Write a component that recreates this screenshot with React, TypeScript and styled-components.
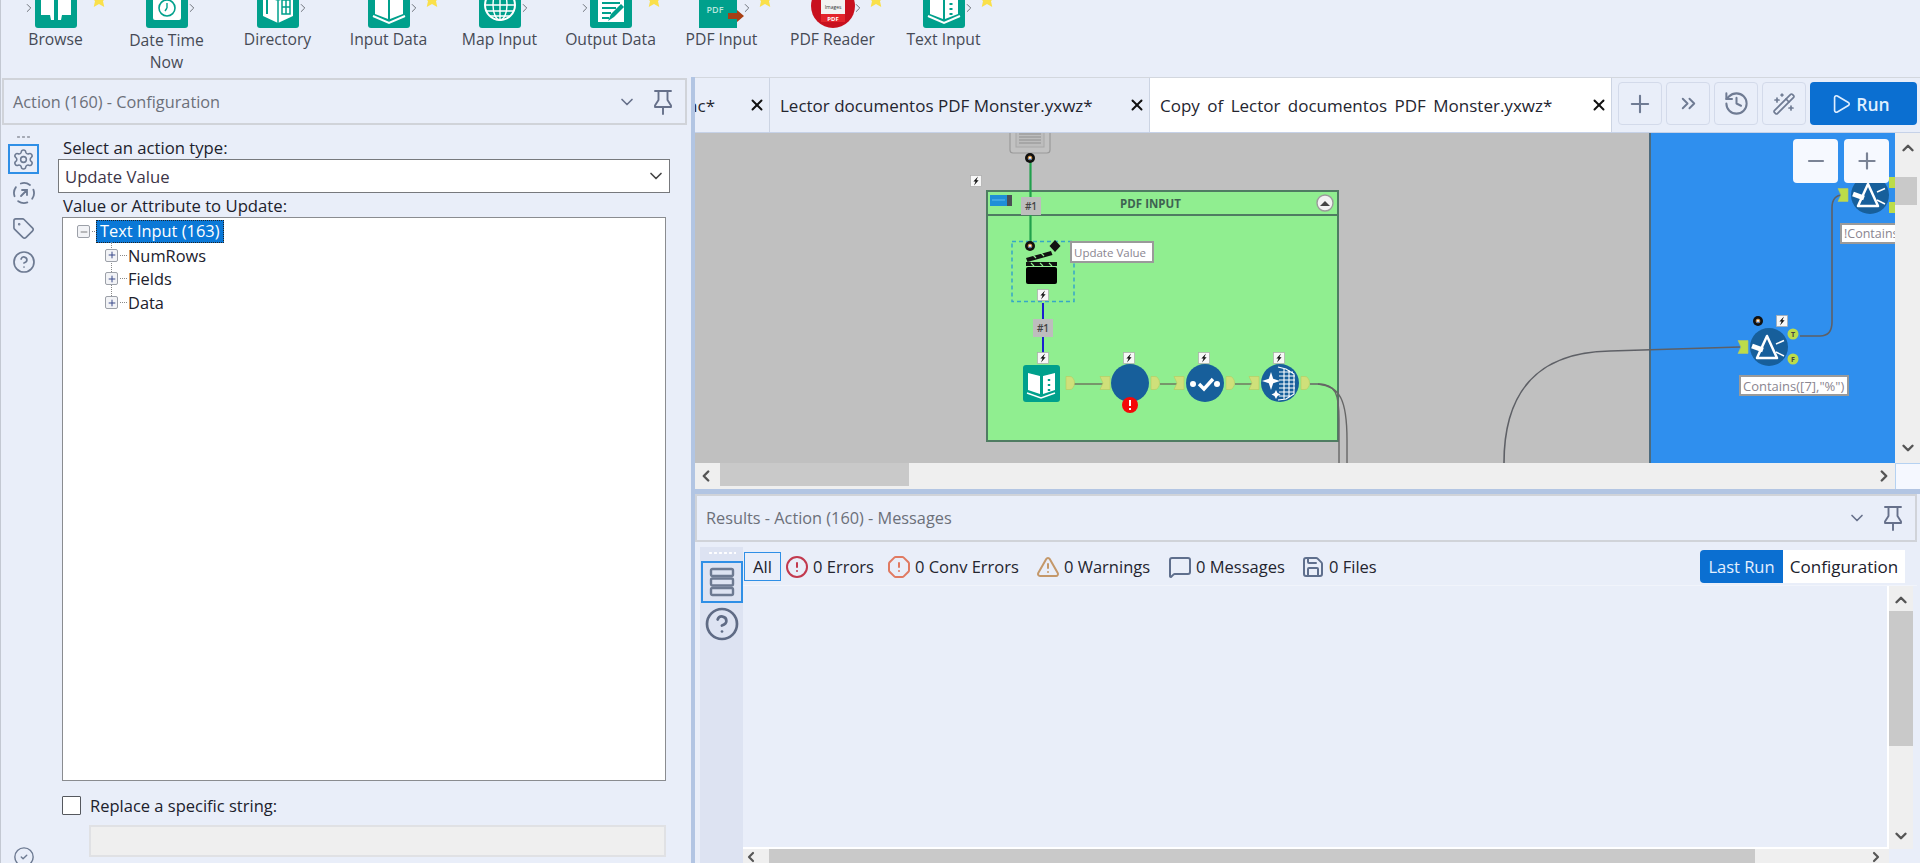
import React from "react";
import styled, { createGlobalStyle } from "styled-components";
import {
  ChevronDown, ChevronUp, ChevronLeft, ChevronRight, Plus, Minus, ChevronsRight, History, WandSparkles,
  Play, X, Settings, Tag, CircleHelp, CircleAlert, OctagonAlert, TriangleAlert, MessageSquare, Save, CircleCheck,
} from "lucide-react";

const FONT = `"Open Sans", "Noto Sans", "Liberation Sans", sans-serif`;
const BG = "#e9eef9";
const OX = 695;
const OY = 133;

const Global = createGlobalStyle`
  html, body { margin: 0; padding: 0; height: 863px; overflow: hidden; background: ${BG}; }
  body { font-family: ${FONT}; color: #20212c; }
  * { box-sizing: border-box; }
`;

const Page = styled.div`display:flex;flex-direction:column;width:1920px;height:863px;overflow:hidden;background:${BG};`;

/* ---------- ribbon ---------- */
const Ribbon = styled.div`display:flex;height:77px;flex:none;border-left:1px solid #c3c8d2;`;
const RibbonItem = styled.div`position:relative;width:111px;flex:none;margin-left:${p => (p.$first ? -1 : 0)}px;display:flex;flex-direction:column;align-items:center;`;
const IconClip = styled.div`height:28px;width:50px;overflow:hidden;display:flex;align-items:flex-end;justify-content:center;flex:none;`;
const RibbonLabel = styled.div`font-size:15.7px;line-height:22px;text-align:center;color:#464a55;width:100px;margin-top:${p => (p.$tall ? 1 : 0)}px;`;
const StarMark = styled.svg`position:absolute;left:90px;top:-10px;width:18px;height:18px;`;
const Caret = styled.span`position:absolute;left:${p => p.$left}px;top:1px;color:#666a72;display:flex;`;

const W = "#fff";
const Tile = ({ children, fill = "#00a08c" }: { children?: React.ReactNode; fill?: string }) => (
  <svg width="42" height="42" viewBox="0 0 42 42" style={{ flex: "none" }}>
    <rect width="42" height="42" rx="3" fill={fill} />
    {children}
  </svg>
);

const BrowseIcon = () => (
  <Tile>
    <path d="M6 12h13v22h-3l-1-5H6zM36 12H23v22h3l1-5h9z" fill={W} />
    <path d="M6 31h9M6 34h8M36 31h-9M36 34h-8" stroke="#00a08c" strokeWidth="1" />
  </Tile>
);
const DateIcon = () => (
  <Tile>
    <rect x="7" y="8" width="28" height="26" rx="2" fill={W} />
    <circle cx="21" cy="22" r="8" fill="none" stroke="#00a08c" strokeWidth="1.6" />
    <path d="M21 22v-5M21 22l-2 3" stroke="#00a08c" strokeWidth="1.4" />
  </Tile>
);
const DirIcon = () => (
  <Tile>
    <path d="M6 10l15 5 15-5v20l-15 7-15-7z" fill={W} />
    <path d="M21 15v22" stroke="#00a08c" strokeWidth="1.5" />
    <path d="M25 14h8v14h-8zM29 14v14M25 21h8" fill="none" stroke="#00a08c" strokeWidth="1.5" />
    <path d="M10 14v14" stroke="#00a08c" strokeWidth="2" />
  </Tile>
);
const BookIcon = () => (
  <Tile>
    <path d="M7 10l13 4v19L7 28zM35 10l-13 4v19l13-5z" fill={W} />
    <path d="M5 30l16 7 16-7" fill="none" stroke={W} strokeWidth="2" />
  </Tile>
);
const MapIcon = () => (
  <Tile>
    <circle cx="21" cy="19" r="15" fill="none" stroke={W} strokeWidth="2" />
    <ellipse cx="21" cy="19" rx="7" ry="15" fill="none" stroke={W} strokeWidth="1.4" />
    <path d="M21 4v30M6 19h30M8 13h26M8 25h26M11 30h20" stroke={W} strokeWidth="1.4" />
  </Tile>
);
const OutputIcon = () => (
  <Tile>
    <rect x="8" y="6" width="26" height="30" fill={W} />
    <path d="M12 17h18M12 22h14M12 27h9M12 32h7" stroke="#00a08c" strokeWidth="2" />
    <path d="M18 35l3-7 10-10 3 3-10 10z" fill="#00a08c" />
  </Tile>
);
const PdfInIcon = () => (
  <svg width="42" height="42" viewBox="2 0 42 42" style={{ flex: "none", overflow: "visible" }}>
    <rect x="0" width="38" height="42" fill="#00a08c" />
    <text x="16" y="27" fill="#b9e6dd" fontSize="9" textAnchor="middle" fontFamily={FONT} fontWeight="600">PDF</text>
    <path d="M29 27h9v-3l7 6-7 6v-3h-9z" fill="#a83f14" />
  </svg>
);
const PdfReadIcon = () => (
  <svg width="44" height="44" viewBox="-1 -1 44 44" style={{ flex: "none" }}>
    <circle cx="21" cy="21" r="22" fill="#c8101e" />
    <rect x="9" y="4" width="24" height="33" fill="#f2f2f2" />
    <rect x="9" y="29" width="24" height="8" fill="#e3242b" />
    <text x="21" y="24" fontSize="5" textAnchor="middle" fill="#333" fontFamily={FONT}>Images</text>
    <text x="21" y="35.500" fontSize="6" fontWeight="700" textAnchor="middle" fill="#fff" fontFamily={FONT}>PDF</text>
  </svg>
);
const TextInIcon = () => (
  <Tile>
    <path d="M7 10l13 4v19L7 28zM35 10l-13 4v19l13-5z" fill={W} />
    <path d="M5 30l16 7 16-7" fill="none" stroke={W} strokeWidth="2" />
    <path d="M28 17v2M28 22v2M28 27v2" stroke="#00a08c" strokeWidth="3" />
  </Tile>
);

const ribbonItems = [
  { label: "Browse", Icon: BrowseIcon, star: true, caret: 29 },
  { label: "Date Time Now", Icon: DateIcon, caret: 81 },
  { label: "Directory", Icon: DirIcon, caret: 81 },
  { label: "Input Data", Icon: BookIcon, star: true, caret: 81 },
  { label: "Map Input", Icon: MapIcon, caret: 81 },
  { label: "Output Data", Icon: OutputIcon, star: true, caret: 30 },
  { label: "PDF Input", Icon: PdfInIcon, star: true, caret: 81 },
  { label: "PDF Reader", Icon: PdfReadIcon, star: true, caret: 81 },
  { label: "Text Input", Icon: TextInIcon, star: true, caret: 81 },
];

const PinIcon = () => (
  <svg width="24" height="26" viewBox="0 0 24 26" fill="none" stroke="currentColor" strokeWidth="1.9" strokeLinejoin="round" strokeLinecap="round">
    <path d="M4 2h16M7.500 2v9L4 16.500V18h16v-1.500L16.500 11V2M12 18v7" />
  </svg>
);

/* ---------- shell ---------- */
const Main = styled.div`display:flex;flex:1;min-height:0;`;
const LeftPanel = styled.div`width:691px;flex:none;display:flex;flex-direction:column;border-left:1px solid #c3c8d2;padding-top:1px;padding-left:1px;overflow:hidden;`;
const PanelTitle = styled.div`height:${p => p.$h}px;flex:none;display:flex;align-items:center;border:2px solid #d0d3d9;padding:0 10px 0 9px;color:#6c7079;font-size:16.3px;margin-right:${p => p.$mr}px;`;
const TitleText = styled.span`flex:1;`;
const TitleChevron = styled.span`display:flex;color:#66708a;margin-right:14px;`;
const TitlePin = styled.span`display:flex;color:#66708a;`;
const LeftBody = styled.div`display:flex;flex:1;min-height:0;`;
const SideRail = styled.div`width:43px;flex:none;display:flex;flex-direction:column;align-items:center;padding-top:10px;position:relative;`;
const Grip = styled.div`width:15px;height:4px;margin-bottom:5px;background-image:radial-gradient(circle,#a4a9b4 1.1px,transparent 1.3px);background-size:5px 4px;`;
const RailButton = styled.div`width:${p => p.$size}px;height:${p => p.$h}px;display:flex;align-items:center;justify-content:center;flex:none;color:#6d7a92;border:${p => (p.$active ? "2px solid #2f8fe6" : "none")};margin-bottom:${p => p.$mb || 0}px;`;
const RailFoot = styled.div`margin-top:auto;margin-bottom:-3px;height:20px;color:#6d7a92;display:flex;align-items:flex-start;`;
const Form = styled.div`flex:1;display:flex;flex-direction:column;padding:12px 21px 0 13px;min-width:0;`;
const FormLabel = styled.div`height:22px;line-height:21px;font-size:16.7px;margin-left:5px;flex:none;white-space:nowrap;`;
const SelectBox = styled.div`height:34px;flex:none;background:#fff;border:1.5px solid #77797d;display:flex;align-items:center;justify-content:space-between;padding:0 1px 0 6px;font-size:16.7px;margin-bottom:2px;color:#3c3548;`;
const SelectChevron = styled.span`display:flex;width:24px;justify-content:center;color:#444;`;
const Tree = styled.div`height:564px;flex:none;margin:0 4px;background:#fff;border:1.5px solid #8a8c90;padding-top:2px;`;
const TreeRow = styled.div`height:23.600px;display:flex;align-items:center;padding-left:${p => p.$indent}px;font-size:16.4px;position:relative;`;
const Expander = styled.span`width:13px;height:13px;border:1px solid #9ca0a8;border-radius:2px;background:#f2f3f6;display:flex;align-items:center;justify-content:center;color:#3a4a8a;flex:none;`;
const Dots = styled.span`width:${p => p.$w}px;border-top:1px dotted #888;flex:none;margin:0 1px 0 2px;`;
const Selected = styled.span`background:#0a78d7;color:#fff;height:23px;line-height:20px;padding:0 3px;width:128px;white-space:nowrap;border:1px dotted #e8862a;outline:1px dotted #222;outline-offset:-1px;overflow:hidden;`;
const TreeGuide = styled.span`position:absolute;left:48px;top:${p => p.$top}px;height:${p => p.$h}px;border-left:1px dotted #888;`;
const TreeWrap = styled.div`position:relative;`;
const CheckRow = styled.div`display:flex;align-items:center;margin:15px 0 0 4px;height:19px;flex:none;font-size:16.5px;white-space:nowrap;`;
const Check = styled.span`width:19px;height:19px;background:#fff;border:1.5px solid #55585e;border-radius:1px;margin-right:9px;flex:none;`;
const Disabled = styled.div`height:32px;flex:none;margin:10px 4px 0 31px;background:#efefef;border:2px solid #e0e1e4;`;
const VSplit = styled.div`width:4px;flex:none;background:#b2c5e3;`;

const RightCol = styled.div`flex:1;min-width:0;display:flex;flex-direction:column;`;
const TabBar = styled.div`height:56px;flex:none;display:flex;border-top:1px solid #d3d7de;border-bottom:1px solid #c6d2e8;`;
const Tab = styled.div`width:${p => p.$w}px;flex:none;display:flex;align-items:center;justify-content:${p => (p.$clip ? "flex-end" : "flex-start")};overflow:hidden;background:${p => (p.$active ? "#fff" : "transparent")};border-right:1px solid #ccd4e3;padding:0 3px 0 10px;font-size:17px;word-spacing:${p => (p.$active ? 3 : 0)}px;color:#24252f;white-space:nowrap;`;
const TabName = styled.span`flex:${p => (p.$clip ? "none" : 1)};margin-right:${p => (p.$clip ? 33 : 0)}px;`;
const TabClose = styled.span`display:flex;color:#111;flex:none;`;
const TabTools = styled.div`flex:1;display:flex;align-items:flex-start;gap:4px;padding:4px 3px 0 6px;`;
const ToolBtn = styled.div`width:44px;height:43px;flex:none;border:1.5px solid #d3daea;border-radius:4px;display:flex;align-items:center;justify-content:center;color:#6f7b93;`;
const RunBtn = styled.div`flex:1;height:43px;background:#0b6fd1;border-radius:4px;color:#dfeeff;display:flex;align-items:center;justify-content:center;gap:4px;padding-right:7px;font-size:17.500px;font-weight:600;`;

/* ---------- canvas ---------- */
const CanvasRow = styled.div`height:330px;flex:none;display:flex;`;
const Canvas = styled.div`width:1200px;flex:none;position:relative;overflow:hidden;display:flex;`;
const GrayArea = styled.div`width:956px;flex:none;background:#c0c0c0;border-right:2px solid #4d6b7e;`;
const BlueArea = styled.div`flex:1;background:#2f8fee;`;
const Diagram = styled.svg`position:absolute;left:0;top:0;width:1200px;height:330px;pointer-events:none;`;
const Group = styled.div`position:absolute;left:${986 - OX}px;top:${190 - OY}px;width:353px;height:252px;background:#90ee90;border:2px solid #4f7c62;`;
const GroupHead = styled.div`height:24px;border-bottom:2px solid #4f7c62;display:flex;align-items:center;justify-content:center;font-size:11.500px;font-weight:700;color:#3e6352;padding-right:24px;`;
const NodeLabel = styled.div`position:absolute;left:${p => p.$x - OX}px;top:${p => p.$y - OY}px;width:${p => p.$w}px;height:${p => p.$h}px;background:#fff;border:2px solid #9a9a9a;font-size:${p => p.$fs}px;font-weight:500;color:#8a8590;padding-left:2px;display:flex;align-items:center;white-space:nowrap;overflow:hidden;`;
const WireTag = styled.div`position:absolute;left:${p => p.$x - OX}px;top:${p => p.$y - OY}px;width:20px;height:18px;background:#bdbdbd;font-size:10px;font-weight:600;color:#444;display:flex;align-items:center;justify-content:center;`;
const ZoomBtn = styled.div`position:absolute;left:${p => p.$x - OX}px;top:6px;width:45px;height:44px;background:#f6f9ff;border-radius:4px;display:flex;align-items:center;justify-content:center;color:#7a8395;`;
const VBar = styled.div`width:25px;flex:none;background:#efefef;position:relative;display:flex;flex-direction:column;align-items:center;justify-content:space-between;padding:6px 0;color:#555;`;
const VThumb = styled.div`position:absolute;left:0;right:3px;top:44px;height:28px;background:#c9c9c9;`;
const HBarRow = styled.div`height:26px;flex:none;display:flex;`;
const HBar = styled.div`width:1200px;flex:none;background:#efefef;position:relative;display:flex;align-items:center;justify-content:space-between;padding:0 2px;color:#555;`;
const HThumb = styled.div`position:absolute;left:25px;top:0;bottom:3px;width:189px;background:#c9c9c9;`;
const Corner = styled.div`flex:1;background:#f5f8ff;border-left:1px solid #b5d2f2;border-top:1px solid #b5d2f2;`;
const HSplit = styled.div`height:5px;flex:none;background:#b2c5e3;`;

/* ---------- results ---------- */
const Results = styled.div`flex:1;min-height:0;display:flex;flex-direction:column;padding-right:3px;`;
const ResultsBody = styled.div`flex:1;min-height:0;display:flex;padding:5px 0 0 5px;`;
const ResRail = styled.div`width:43px;flex:none;background:#dde3f2;display:flex;flex-direction:column;align-items:center;padding-top:4px;color:#5f6b85;`;
const ResGrip = styled.div`width:28px;height:4px;margin-bottom:6px;background-image:radial-gradient(circle,#fff 1.1px,transparent 1.3px);background-size:5px 4px;`;
const ResMain = styled.div`flex:1;min-width:0;display:flex;flex-direction:column;`;
const FilterBar = styled.div`height:39px;flex:none;display:flex;align-items:flex-start;border-bottom:1px solid #f1f4fb;padding:5px 9px 0 1px;`;
const AllBtn = styled.div`width:37px;height:29px;border:1.5px solid #2f8fe6;display:flex;align-items:center;justify-content:center;font-size:16.700px;margin-right:4px;flex:none;`;
const FilterItem = styled.div`width:${p => p.$w}px;height:29px;flex:none;display:flex;align-items:center;gap:4px;font-size:16.500px;white-space:nowrap;color:#24252f;`;
const FilterIcon = styled.span`display:flex;color:${p => p.$color};flex:none;`;
const Segment = styled.div`margin-left:auto;display:flex;height:33px;margin-top:-2px;margin-right:3px;font-size:16.500px;flex:none;`;
const SegOn = styled.div`width:83px;background:#0b6fd1;color:#e4f0ff;border-radius:4px 0 0 4px;display:flex;align-items:center;justify-content:center;`;
const SegOff = styled.div`width:122px;background:#fff;display:flex;align-items:center;justify-content:center;font-weight:500;font-size:17px;`;
const ListRow = styled.div`flex:1;min-height:0;display:flex;`;
const ListArea = styled.div`flex:1;border-right:2px solid #fff;border-bottom:2px solid #fff;`;
const ResVBar = styled.div`width:24px;flex:none;background:#efefef;margin-right:4px;position:relative;display:flex;flex-direction:column;align-items:center;justify-content:space-between;padding:5px 0 4px;color:#555;`;
const ResVThumb = styled.div`position:absolute;left:0;right:0;top:25px;height:135px;background:#c9c9c9;`;
const ResHBar = styled.div`height:14px;flex:none;background:#efefef;position:relative;overflow:hidden;color:#555;margin-right:28px;display:flex;justify-content:space-between;padding:0 5px 0 0;`;
const ResHThumb = styled.div`position:absolute;left:26px;top:0;bottom:0;width:986px;background:#c9c9c9;`;

/* ---------- diagram primitives ---------- */
const Bolt = ({ x, y }: { x: number; y: number }) => (
  <g transform={`translate(${x} ${y})`}>
    <rect x="-5.500" y="-5.500" width="11" height="11" fill="#f7f7f7" stroke="#aaa" strokeWidth=".7" />
    <path d="M2-4.500L-2.600 .6h2.200L-2 4.500 2.600-.8H.4z" fill="#111" />
  </g>
);
const Timer = ({ x, y }: { x: number; y: number }) => (
  <g transform={`translate(${x} ${y})`}>
    <circle r="5" fill="#111" />
    <circle r="1.900" fill="#eee" stroke="#d98a2a" strokeWidth=".9" />
    <path d="M-1.600 1.300h3.200" stroke="#2a6fd0" strokeWidth="1" />
  </g>
);
const AnchorOut = ({ x, y, c = "#cfe07a" }: { x: number; y: number; c?: string }) => (
  <path d={`M${x - 4} ${y - 6.500}h4a4.500 6.500 0 0 1 4.500 6.500a4.500 6.500 0 0 1-4.500 6.500h-4z`} fill={c} stroke="#b8c95e" strokeWidth=".6" />
);
const AnchorIn = ({ x, y, c = "#cfe07a" }: { x: number; y: number; c?: string }) => (
  <path d={`M${x - 5} ${y - 6.500}h10v13h-10l3-6.500z`} fill={c} stroke="#b8c95e" strokeWidth=".6" />
);
const Disc = ({ x, y }: { x: number; y: number }) => <circle cx={x} cy={y} r="19" fill="#175f9b" />;
const Prism = ({ x, y }: { x: number; y: number }) => (
  <g transform={`translate(${x} ${y})`} fill="none" stroke="#fff">
    <path d="M-1-12L9 10H-11z" strokeWidth="2.500" strokeLinejoin="round" />
    <path d="M-16-2L-5 2" strokeWidth="5" />
    <path d="M8-4L16-7.500M8 4L16 8" strokeWidth="1.500" />
  </g>
);
const StarIcon = () => (
  <StarMark viewBox="0 0 24 24"><path d="M12 1l3.300 7.400 8 .8-6 5.400 1.700 7.900L12 18.500 5 22.500l1.700-7.900-6-5.400 8-.8z" fill="#fae04a" /></StarMark>
);

const Wires = () => (
  <Diagram viewBox={`${OX} ${OY} 1200 330`}>
    <rect x="1010" y="120" width="40" height="33" rx="3" fill="#c2c2c2" stroke="#9a9a9a" strokeWidth="1.200" />
    <rect x="1016" y="120" width="28" height="27" fill="#bdbdbd" stroke="#a8a8a8" />
    <path d="M1019 134h22M1019 137h22M1019 140h22M1019 143h22" stroke="#8f8f8f" strokeWidth="1" />
    <path d="M1030.500 160V245" stroke="#21a04c" strokeWidth="2.200" fill="none" />
    <path d="M1043 303V353" stroke="#1b1fd0" strokeWidth="2" fill="none" />
    <Timer x={1030} y={158} />
    <Bolt x={976} y={181} />
    <rect x="990" y="195" width="22" height="11" fill="#1f8fd8" />
    <rect x="1007" y="195" width="5" height="11" fill="#4b4f55" />
    <path d="M992 200h13" stroke="#5fbdf0" strokeWidth="1" />
    <circle cx="1325" cy="203" r="8" fill="#f2f2f2" stroke="#9b9b9b" strokeWidth="1.400" />
    <path d="M1320 206l5-5 5 5z" fill="#444" />

    <rect x="1012" y="241.500" width="62" height="60" fill="none" stroke="#35a7c7" strokeWidth="1.500" strokeDasharray="4 3" />
    <Timer x={1030} y={246} />
    <path d="M1055 240l5.500 6-5.500 6-5.500-6z" fill="#111" />
    <path d="M1026 258l25-7 1.500 4-25 7z" fill="#111" />
    <rect x="1026" y="262" width="31" height="4" fill="#111" />
    <rect x="1026" y="267" width="31" height="17" rx="2" fill="#000" />
    <path d="M1031 263l3 3M1040 263l3 3M1049 263l3 3M1033 255l3 3M1041 253l3 3" stroke="#90ee90" strokeWidth="1.200" />
    <Bolt x={1043} y={295} />

    <path d="M1073 384H1105M1160 384H1180M1235 384H1255" stroke="#6f7a5f" strokeWidth="1.600" fill="none" />
    <path d="M1310 384H1318C1336 384 1339 394 1339 420V463" stroke="#666" strokeWidth="1.400" fill="none" />
    <path d="M1318 384C1340 386 1347 400 1347 440V463" stroke="#666" strokeWidth="1.400" fill="none" />
    <path d="M1504 463C1504 395 1535 352 1610 351L1740 347" stroke="#5e6066" strokeWidth="1.600" fill="none" />
    <path d="M1800 336H1820Q1832 336 1832 322V208Q1832 195 1843 195" stroke="#5e6066" strokeWidth="1.600" fill="none" />

    <Bolt x={1043} y={358} /><Bolt x={1129} y={358} /><Bolt x={1204} y={358} /><Bolt x={1279} y={358} />
    <rect x="1023" y="365" width="37" height="37" rx="3" fill="#00a08c" />
    <path d="M1028 373l12 3v18l-12-4zM1055 373l-12 3v18l12-4z" fill="#fff" />
    <path d="M1027 393l14 5 14-5" fill="none" stroke="#fff" strokeWidth="1.400" />
    <path d="M1049 379v2M1049 384v2M1049 389v2" stroke="#00a08c" strokeWidth="2.400" />
    <AnchorOut x={1070} y={383} /><AnchorIn x={1105} y={383} />
    <AnchorOut x={1155} y={383} /><AnchorIn x={1179} y={383} />
    <AnchorOut x={1230} y={383} /><AnchorIn x={1254} y={383} />
    <AnchorOut x={1305} y={383} />
    <Disc x={1130} y={383} />
    <circle cx="1130" cy="405" r="8" fill="#f40808" />
    <path d="M1130 400v6M1130 408v2" stroke="#fff" strokeWidth="2" />
    <Disc x={1205} y={383} />
    <circle cx="1193" cy="384" r="3" fill="#fff" /><circle cx="1217" cy="384" r="3" fill="#fff" />
    <path d="M1199 384l5 5 9-10" stroke="#fff" strokeWidth="3.400" fill="none" />
    <Disc x={1280} y={383} />
    <path d="M1271 372l2.200 6.800 6.800 2.200-6.800 2.200-2.200 6.800-2.200-6.800-6.800-2.200 6.800-2.200z" fill="#fff" />
    <path d="M1276 390l1.500 3 3 1.500-3 1.500-1.500 3-1.500-3-3-1.500 3-1.500z" fill="#fff" />
    <path d="M1278 367l8 2 8 5v20l-8 5-8 1M1279 372h14M1279 376h16M1279 380h16M1279 384h16M1279 388h16M1279 392h15M1279 396h12M1284 368v31M1289 370v27" fill="none" stroke="#fff" strokeWidth="1.100" />

    <Timer x={1758} y={321} /><Bolt x={1782} y={321} />
    <AnchorIn x={1743} y={347} c="#bcdc4a" />
    <Disc x={1769} y={347} />
    <Prism x={1768} y={348} />
    <circle cx="1793" cy="334" r="5.500" fill="#bcdc4a" />
    <text x="1793" y="337" fontSize="7" fontWeight="700" textAnchor="middle" fill="#444" fontFamily={FONT}>T</text>
    <circle cx="1793" cy="359" r="5.500" fill="#bcdc4a" />
    <text x="1793" y="362" fontSize="7" fontWeight="700" textAnchor="middle" fill="#444" fontFamily={FONT}>F</text>
    <AnchorIn x={1843} y={195} c="#bcdc4a" />
    <Disc x={1870} y={195} />
    <Prism x={1869} y={196} />
    <rect x="1889" y="177" width="6" height="11" fill="#bcdc4a" />
    <rect x="1889" y="202" width="6" height="11" fill="#bcdc4a" />
  </Diagram>
);

const CycleIcon = () => (
  <svg width="24" height="24" viewBox="0 0 24 24" fill="none" stroke="currentColor" strokeWidth="1.800" strokeLinecap="round">
    <circle cx="12" cy="12" r="10" strokeDasharray="9.500 6.200" transform="rotate(-20 12 12)" />
    <path d="M9 15l6-6M10 9h5v5" />
  </svg>
);
const RowsIcon = () => (
  <svg width="26" height="30" viewBox="0 0 26 30" fill="none" stroke="currentColor" strokeWidth="2.400">
    <rect x="2" y="2" width="22" height="7" rx="1.500" />
    <rect x="2" y="11.500" width="22" height="7" rx="1.500" />
    <rect x="2" y="21" width="22" height="7" rx="1.500" />
  </svg>
);

const filters = [
  { w: 102, Icon: CircleAlert, color: "#c2394e", text: "0 Errors" },
  { w: 149, Icon: OctagonAlert, color: "#e07a62", text: "0 Conv Errors" },
  { w: 132, Icon: TriangleAlert, color: "#c4986a", text: "0 Warnings" },
  { w: 133, Icon: MessageSquare, color: "#5f6f8d", text: "0 Messages" },
  { w: 90, Icon: Save, color: "#5f6f8d", text: "0 Files" },
];

export default function App() {
  return (
    <Page>
      <Global />
      <Ribbon>
        {ribbonItems.map(({ label, Icon, star, caret }, i) => (
          <RibbonItem key={label} $first={i === 0}>
            <IconClip><Icon /></IconClip>
            <RibbonLabel $tall={label.length > 12}>{label}</RibbonLabel>
            {star && <StarIcon />}
            <Caret $left={caret - 7}><ChevronRight size={14} strokeWidth={1.600} /></Caret>
          </RibbonItem>
        ))}
      </Ribbon>
      <Main>
        <LeftPanel>
          <PanelTitle $mr={4} $h={47}>
            <TitleText>Action (160) - Configuration</TitleText>
            <TitleChevron><ChevronDown size={20} /></TitleChevron>
            <TitlePin><PinIcon /></TitlePin>
          </PanelTitle>
          <LeftBody>
            <SideRail>
              <Grip />
              <RailButton $size={31} $h={30} $active $mb={4}><Settings size={23} strokeWidth={1.600} /></RailButton>
              <RailButton $size={31} $h={30} $mb={5}><CycleIcon /></RailButton>
              <RailButton $size={31} $h={30} $mb={4}><Tag size={23} strokeWidth={1.700} /></RailButton>
              <RailButton $size={31} $h={30}><CircleHelp size={24} strokeWidth={1.700} /></RailButton>
              <RailFoot><CircleCheck size={22} strokeWidth={1.500} /></RailFoot>
            </SideRail>
            <Form>
              <FormLabel>Select an action type:</FormLabel>
              <SelectBox>Update Value<SelectChevron><ChevronDown size={20} /></SelectChevron></SelectBox>
              <FormLabel>Value or Attribute to Update:</FormLabel>
              <Tree>
                <TreeWrap>
                  <TreeRow $indent={14}>
                    <Expander><Minus size={10} color="#666" /></Expander>
                    <Dots $w={3} />
                    <Selected>Text Input (163)</Selected>
                  </TreeRow>
                  <TreeGuide $top={22} $h={58} />
                  <TreeRow $indent={42}>
                    <Expander><Plus size={10} strokeWidth={2.400} /></Expander>
                    <Dots $w={7} />
                    <span>NumRows</span>
                  </TreeRow>
                  <TreeRow $indent={42}>
                    <Expander><Plus size={10} strokeWidth={2.400} /></Expander>
                    <Dots $w={7} />
                    <span>Fields</span>
                  </TreeRow>
                  <TreeRow $indent={42}>
                    <Expander><Plus size={10} strokeWidth={2.400} /></Expander>
                    <Dots $w={7} />
                    <span>Data</span>
                  </TreeRow>
                </TreeWrap>
              </Tree>
              <CheckRow><Check />Replace a specific string:</CheckRow>
              <Disabled />
            </Form>
          </LeftBody>
        </LeftPanel>
        <VSplit />
        <RightCol>
          <TabBar>
            <Tab $w={75} $clip><TabName $clip>nc*</TabName><TabClose><X size={18} strokeWidth={2.600} /></TabClose></Tab>
            <Tab $w={380}><TabName>Lector documentos PDF Monster.yxwz*</TabName><TabClose><X size={18} strokeWidth={2.600} /></TabClose></Tab>
            <Tab $w={462} $active><TabName>Copy of Lector documentos PDF Monster.yxwz*</TabName><TabClose><X size={18} strokeWidth={2.600} /></TabClose></Tab>
            <TabTools>
              <ToolBtn><Plus size={28} strokeWidth={1.800} /></ToolBtn>
              <ToolBtn><ChevronsRight size={23} /></ToolBtn>
              <ToolBtn><History size={27} strokeWidth={1.800} /></ToolBtn>
              <ToolBtn><WandSparkles size={24} strokeWidth={1.700} /></ToolBtn>
              <RunBtn><Play size={22} strokeWidth={1.800} />Run</RunBtn>
            </TabTools>
          </TabBar>
          <CanvasRow>
            <Canvas>
              <GrayArea />
              <BlueArea />
              <Group>
                <GroupHead>PDF INPUT</GroupHead>
              </Group>
              <Wires />
              <WireTag $x={1021} $y={197}>#1</WireTag>
              <WireTag $x={1033} $y={319}>#1</WireTag>
              <NodeLabel $x={1070} $y={241} $w={84} $h={22} $fs={11.500}>Update Value</NodeLabel>
              <NodeLabel $x={1739} $y={375} $w={110} $h={21} $fs={13}>Contains([7],"%")</NodeLabel>
              <NodeLabel $x={1840} $y={223} $w={58} $h={21} $fs={12.500}>!Contains</NodeLabel>
              <ZoomBtn $x={1793}><Minus size={24} strokeWidth={2.200} /></ZoomBtn>
              <ZoomBtn $x={1844}><Plus size={26} strokeWidth={2} /></ZoomBtn>
            </Canvas>
            <VBar>
              <ChevronUp size={18} strokeWidth={3.200} />
              <VThumb />
              <ChevronDown size={18} strokeWidth={3.200} />
            </VBar>
          </CanvasRow>
          <HBarRow>
            <HBar>
              <ChevronLeft size={18} strokeWidth={3.200} />
              <HThumb />
              <ChevronRight size={18} strokeWidth={3.200} />
            </HBar>
            <Corner />
          </HBarRow>
          <HSplit />
          <Results>
            <PanelTitle $mr={0} $h={48}>
              <TitleText>Results - Action (160) - Messages</TitleText>
              <TitleChevron><ChevronDown size={20} /></TitleChevron>
              <TitlePin><PinIcon /></TitlePin>
            </PanelTitle>
            <ResultsBody>
              <ResRail>
                <ResGrip />
                <RailButton $size={42} $h={42} $active $mb={3}><RowsIcon /></RailButton>
                <CircleHelp size={36} strokeWidth={1.800} />
              </ResRail>
              <ResMain>
                <FilterBar>
                  <AllBtn>All</AllBtn>
                  {filters.map(({ w, Icon, color, text }) => (
                    <FilterItem key={text} $w={w}>
                      <FilterIcon $color={color}><Icon size={24} strokeWidth={2} /></FilterIcon>
                      {text}
                    </FilterItem>
                  ))}
                  <Segment>
                    <SegOn>Last Run</SegOn>
                    <SegOff>Configuration</SegOff>
                  </Segment>
                </FilterBar>
                <ListRow>
                  <ListArea />
                  <ResVBar>
                    <ChevronUp size={18} strokeWidth={3.200} />
                    <ResVThumb />
                    <ChevronDown size={18} strokeWidth={3.200} />
                  </ResVBar>
                </ListRow>
                <ResHBar>
                  <ChevronLeft size={16} strokeWidth={3.200} />
                  <ResHThumb />
                  <ChevronRight size={16} strokeWidth={3.200} />
                </ResHBar>
              </ResMain>
            </ResultsBody>
          </Results>
        </RightCol>
      </Main>
    </Page>
  );
}
